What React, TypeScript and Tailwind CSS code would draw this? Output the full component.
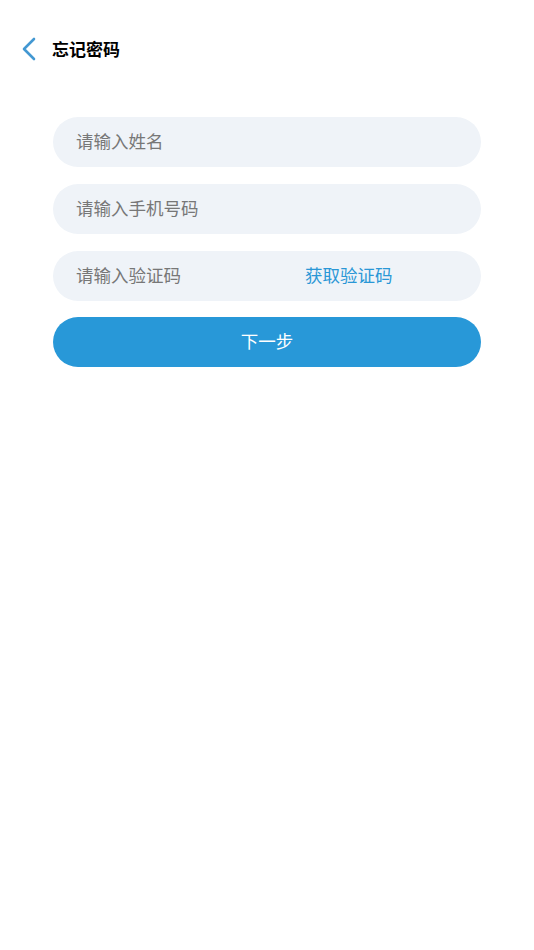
const font = { fontFamily: '"Noto Sans CJK SC", "Noto Sans", sans-serif' };

export default function App() {
  return (
    <div className="w-[534px] h-[950px] bg-white" style={font}>
      <div className="flex items-center h-[98px] pl-[21px]">
        <svg width="16" height="26" viewBox="0 0 16 26" fill="none">
          <polyline points="13,3 3,13 13,23" stroke="#4398d2" strokeWidth="2.6" strokeLinecap="round" strokeLinejoin="round" />
        </svg>
        <span className="ml-[15px] text-[17px] font-bold text-black -mt-[1px]">忘记密码</span>
      </div>
      <div className="flex flex-col gap-[17px] px-[53px] pt-[19px]">
        <div className="h-[50px] rounded-full bg-[#eff3f8] flex items-center pl-[23px] pb-[2px] text-[17.5px] text-[#777]">请输入姓名</div>
        <div className="h-[50px] rounded-full bg-[#eff3f8] flex items-center pl-[23px] pb-[2px] text-[17.5px] text-[#777]">请输入手机号码</div>
        <div className="h-[50px] rounded-full bg-[#eff3f8] flex items-center pl-[23px] pb-[2px] text-[17.5px] text-[#777]">
          <span className="w-[229px]">请输入验证码</span>
          <span className="text-[#2a97d6]">获取验证码</span>
        </div>
        <button className="h-[50px] -mt-[1px] pb-[2px] rounded-full bg-[#2898d8] text-white text-[17.5px]">下一步</button>
      </div>
    </div>
  );
}
